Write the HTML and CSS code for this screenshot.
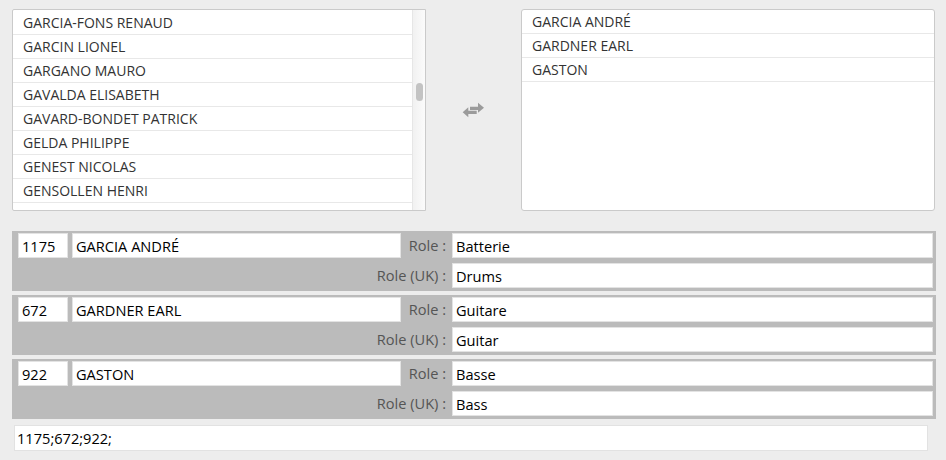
FILE: index.html
```html
<!DOCTYPE html>
<html lang="fr">
<head>
    <meta charset="UTF-8">
    <meta name="viewport" content="width=device-width, initial-scale=1.0">
    <title>Musiciens</title>
    <link rel="stylesheet" href="styles.css">
</head>
<body>
    <div class="picker">
        <div class="listbox left">
            <ul class="names">
                <li>GARCIA-FONS RENAUD</li>
                <li>GARCIN LIONEL</li>
                <li>GARGANO MAURO</li>
                <li>GAVALDA ELISABETH</li>
                <li>GAVARD-BONDET PATRICK</li>
                <li>GELDA PHILIPPE</li>
                <li>GENEST NICOLAS</li>
                <li>GENSOLLEN HENRI</li>
                <li>GEORGETTE DAVID</li>
            </ul>
            <div class="track"><div class="thumb"></div></div>
        </div>

        <div class="swap">
            <svg width="23" height="16" viewBox="0 0 23 16">
                <path d="M8 4.7H16V0.7L22 5.7L16 10.7V8H8Z" fill="#9b9b9b"/>
                <path d="M14.7 8.7V12H6.3V15.3L0.7 10.3L6.3 5.3V8.7Z" fill="#9b9b9b"/>
            </svg>
        </div>

        <div class="listbox right">
            <ul class="names">
                <li>GARCIA ANDRÉ</li>
                <li>GARDNER EARL</li>
                <li>GASTON</li>
            </ul>
        </div>
    </div>

    <div class="roles">
        <div class="musician">
            <input class="field" value="1175" readonly>
            <input class="field" value="GARCIA ANDRÉ" readonly>
            <span class="lbl">Role :</span>
            <input class="field" value="Batterie" readonly>
            <span class="lbl uk">Role (UK) :</span>
            <input class="field" value="Drums" readonly>
        </div>
        <div class="musician">
            <input class="field" value="672" readonly>
            <input class="field" value="GARDNER EARL" readonly>
            <span class="lbl">Role :</span>
            <input class="field" value="Guitare" readonly>
            <span class="lbl uk">Role (UK) :</span>
            <input class="field" value="Guitar" readonly>
        </div>
        <div class="musician">
            <input class="field" value="922" readonly>
            <input class="field" value="GASTON" readonly>
            <span class="lbl">Role :</span>
            <input class="field" value="Basse" readonly>
            <span class="lbl uk">Role (UK) :</span>
            <input class="field" value="Bass" readonly>
        </div>
    </div>

    <input class="ids" value="1175;672;922;" readonly>
</body>
</html>
```

FILE: styles.css
```css
*{
    box-sizing: border-box;
    margin: 0;
    padding: 0;
}
body{
    background-color: #ededed;
    font-family: "Open Sans", sans-serif;
    font-size: 14px;
    color: #333;
}
.picker{
    display: flex;
    padding: 9px 0 0 12px;
}
.listbox{
    width: 414px;
    height: 202px;
    background-color: #fff;
    border: 1px solid #cacaca;
    border-radius: 3px;
    display: flex;
    overflow: hidden;
}
.left{
    border-radius: 2px 0 0 2px;
}
.names{
    list-style: none;
    flex: 1;
}
.left .names{
    padding-top: 1px;
}
.names li{
    height: 24px;
    line-height: 23px;
    padding-left: 10px;
    border-bottom: 1px solid #e8e8e8;
    white-space: nowrap;
}
.track{
    width: 13px;
    border-left: 1px solid #e6e6e6;
    background: linear-gradient(to right, #f1f1f1, #fbfbfb);
}
.thumb{
    width: 7px;
    height: 18px;
    margin: 73px 0 0 3px;
    border-radius: 4px;
    background-color: #c3c3c3;
}
.swap{
    width: 95px;
    display: flex;
    align-items: center;
    justify-content: center;
}
.swap svg{
    display: block;
}
.roles{
    margin: 20px 0 0 12px;
    width: 924px;
    display: flex;
    flex-direction: column;
    gap: 4px;
}
.musician{
    background-color: #bbbbbb;
    padding: 2px 3px 3px 6px;
    display: grid;
    grid-template-columns: 50px 329px 43px 481px;
    column-gap: 4px;
    row-gap: 5px;
    font-size: 14.6px;
}
.field{
    height: 25px;
    border: 1px solid #e3e3e3;
    background-color: #fff;
    font: inherit;
    color: #000;
    padding: 0 3px;
    outline: none;
    min-width: 0;
}
.lbl{
    line-height: 25px;
    text-align: right;
    padding-right: 2px;
    color: #555;
    white-space: nowrap;
}
.uk{
    grid-column: 1 / 4;
}
.ids{
    display: block;
    margin: 6px 0 0 14px;
    width: 914px;
    height: 26px;
    border: 1px solid #e2e2e2;
    background-color: #fff;
    font-family: "Open Sans", sans-serif;
    font-size: 14.6px;
    color: #000;
    padding: 0 2px;
    outline: none;
}
```
